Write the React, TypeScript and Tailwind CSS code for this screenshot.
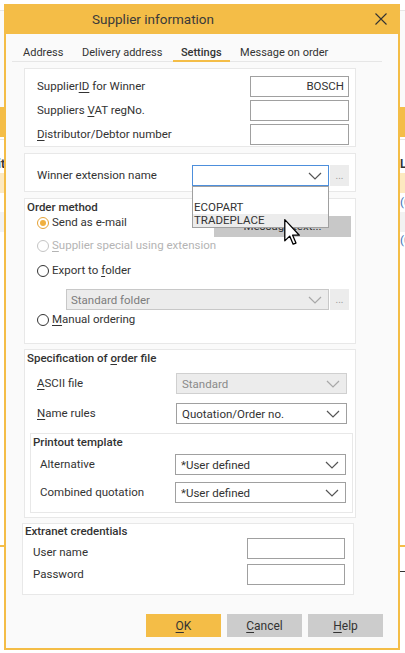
import React from "react";

const Chevron = ({ color = "#555" }: { color?: string }) => (
  <svg width="14" height="8" viewBox="0 0 14 8" className="shrink-0">
    <polyline points="1,1 7,7 13,1" fill="none" stroke={color} strokeWidth="1.2" />
  </svg>
);

const U = ({ children }: { children: React.ReactNode }) => (
  <span className="underline decoration-1 underline-offset-[2px]">{children}</span>
);

type SelectProps = {
  value?: string;
  disabled?: boolean;
  focused?: boolean;
  className?: string;
  children?: React.ReactNode;
};

const Select = ({ value = "", disabled, focused, className = "", children }: SelectProps) => (
  <div
    className={
      "relative h-[21px] flex items-center justify-between pl-[5px] pr-[6px] border " +
      (focused
        ? "border-[#4d8fdc] bg-white "
        : disabled
        ? "border-[#d0d0d0] bg-[#ececec] text-[#8a8a8a] "
        : "border-[#a0a0a0] bg-white text-[#333] ") +
      className
    }
  >
    <span className="truncate leading-[14px]">{value}</span>
    <Chevron color={disabled ? "#a8a8a8" : "#555"} />
    {children}
  </div>
);

const Dots = () => (
  <div className="w-[19px] h-[21px] ml-[1px] bg-[#ececec] flex items-center justify-center text-[10px] text-[#9a9a9a] leading-none">
    ...
  </div>
);

const Radio = ({ checked, disabled }: { checked?: boolean; disabled?: boolean }) => (
  <div
    className={
      "w-[12px] h-[12px] rounded-full border flex items-center justify-center shrink-0 bg-white " +
      (checked ? "border-[#e5a235]" : disabled ? "border-[#c4c4c4]" : "border-[#333]")
    }
  >
    {checked && <div className="w-[6px] h-[6px] rounded-full bg-[#f0b040]" />}
  </div>
);

const Input = ({ value = "", className = "" }: { value?: string; className?: string }) => (
  <div
    className={
      "h-[21px] border border-[#a0a0a0] bg-white flex items-center justify-end pr-[4px] text-[#333] " +
      className
    }
  >
    {value}
  </div>
);

const Button = ({ children, primary }: { children: React.ReactNode; primary?: boolean }) => (
  <div
    className={
      "w-[75px] h-[23px] flex items-center justify-center text-[12px] text-[#333] " +
      (primary ? "bg-[#f4bd47]" : "bg-[#cccccc]")
    }
  >
    {children}
  </div>
);

const Cursor = () => (
  <svg width="17" height="27" viewBox="0 0 13 21" className="absolute left-[284px] top-[219px] z-30">
    <path
      d="M0.5,0.5 L0.5,17 L4.3,13.3 L7,19.6 L9.2,18.7 L6.6,12.6 L11.8,12.6 Z"
      fill="#fff"
      stroke="#000"
      strokeWidth="1"
      strokeLinejoin="round"
    />
  </svg>
);

export default function App() {
  return (
    <div className="relative w-[405px] h-[653px] overflow-hidden bg-white font-[Roboto,'Liberation_Sans',sans-serif] text-[11.5px] text-[#333]">
      {/* background page */}
      <div className="flex flex-col w-full">
        <div className="h-[10px] bg-white" />
        <div className="h-px bg-[#e6e6e6]" />
        <div className="h-[96px] bg-[#fafafa]" />
        <div className="h-[30px] bg-[#f4bd47]" />
        <div className="h-[2px] bg-white" />
        <div className="h-px bg-[#e6e6e6]" />
        <div className="h-[33px] flex items-end justify-between font-bold text-[12px] leading-[18px]">
          <div className="w-[5px] overflow-hidden flex justify-end"><span>Unit</span></div>
          <div className="w-[6px] overflow-hidden"><span className="pl-[1px]">List</span></div>
        </div>
        <div className="h-[20px] bg-[#fde9c0]" />
        <div className="h-[19px] flex justify-end items-center text-[#3b6fb6]">
          <div className="w-[5px] overflow-hidden"><span>(0)</span></div>
        </div>
        <div className="h-[20px] bg-[#f2f2f2]" />
        <div className="h-[18px] flex justify-end items-center text-[#3b6fb6]">
          <div className="w-[5px] overflow-hidden"><span>(0)</span></div>
        </div>
        <div className="h-[295px]" />
        <div className="h-[2px] bg-[#f4bd47]" />
        <div className="h-[24px]" />
        <div className="h-px flex justify-end">
          <div className="w-[5px] bg-[#333]" />
        </div>
      </div>

      {/* dialog */}
      <div className="absolute left-[4px] top-[4px] w-[396px] h-[646px] border-x-2 border-b-2 border-[#f4bd47] bg-[#fafafa] flex flex-col">
        <div className="h-[30px] bg-[#f4bd47] flex items-center justify-between pl-[86px] pr-[11px]">
          <span className="text-[13.5px] text-[#3a3a3a]">Supplier information</span>
          <svg width="12" height="12" viewBox="0 0 12 12">
            <path d="M0.5,0.5 L11.5,11.5 M11.5,0.5 L0.5,11.5" stroke="#333" strokeWidth="1.1" />
          </svg>
        </div>

        {/* tabs */}
        <div className="ml-[6px] w-[370px] h-[28px] border-b border-[#e6e6e6] flex items-end gap-[2.5px] pl-[3px] text-[11px]">
          <div className="px-[8px] pb-[1px] leading-[14px]">Address</div>
          <div className="px-[8px] pb-[1px] leading-[14px]">Delivery address</div>
          <div className="px-[8px] pb-0 leading-[14px] border-b-2 border-[#f4bd47] -mb-px font-medium">Settings</div>
          <div className="px-[8px] pb-[1px] leading-[14px]">Message on order</div>
        </div>

        <div className="pl-[18px] flex flex-col">
          {/* section 1 */}
          <div className="mt-[6px] w-[332px] border border-[#e8e8e8] bg-white pt-[7px] pb-[1px] pl-[12px] pr-[6px] flex flex-col gap-[3px]">
            <div className="h-[21px] flex items-center">
              <span>Supplier<U>ID</U> for Winner</span>
              <Input value="BOSCH" className="ml-auto w-[99px]" />
            </div>
            <div className="h-[21px] flex items-center">
              <span>Suppliers <U>V</U>AT regNo.</span>
              <Input className="ml-auto w-[99px]" />
            </div>
            <div className="h-[21px] flex items-center">
              <span><U>D</U>istributor/Debtor number</span>
              <Input className="ml-auto w-[99px]" />
            </div>
          </div>

          {/* section 2 */}
          <div className="mt-[6px] w-[332px] border border-[#e8e8e8] bg-white pt-[11px] pb-[5px] pl-[12px] flex items-center">
            <span className="w-[155px]">Winner extension name</span>
            <div className="relative">
              <Select focused className="w-[137px]">
                <div className="absolute left-[-1px] top-[20px] w-[137px] h-[42px] border border-[#a0a0a0] bg-white z-20 flex flex-col text-[#333]">
                  <div className="h-[14px]" />
                  <div className="h-[13px] leading-[13px] pl-[1px]">ECOPART</div>
                  <div className="h-[13px] leading-[13px] pl-[1px] bg-[#ececec]">TRADEPLACE</div>
                </div>
              </Select>
            </div>
            <Dots />
          </div>

          {/* section 3 */}
          <div className="mt-[6px] w-[332px] h-[146px] border border-[#e8e8e8] bg-white pt-px flex flex-col">
            <div className="pl-[2px] leading-[14px] font-medium">Order method</div>
            <div className="mt-[2px] flex items-start pr-[4px]">
              <div className="pl-[12px] h-[14px] flex items-center gap-[3px]">
                <Radio checked />
                <span>Send as e-mail</span>
              </div>
              <div className="ml-auto w-[137px] h-[21px] bg-[#c8c8c8] flex items-center justify-center">
                Message text...
              </div>
            </div>
            <div className="mt-[2px] pl-[12px] h-[14px] flex items-center gap-[3px] text-[#b4b4b4]">
              <Radio disabled />
              <span><U>S</U>upplier special using extension</span>
            </div>
            <div className="mt-[11px] pl-[12px] h-[14px] flex items-center gap-[3px]">
              <Radio />
              <span>Export to <U>f</U>older</span>
            </div>
            <div className="mt-[11px] pl-[41px] flex items-center">
              <Select disabled value="Standard folder" className="w-[263px] !pl-[4px] !text-[#7c7c7c] !border-[#c8c8c8]" />
              <Dots />
            </div>
            <div className="mt-[3px] pl-[12px] h-[14px] flex items-center gap-[3px]">
              <Radio />
              <span><U>M</U>anual ordering</span>
            </div>
          </div>

          {/* section 4 */}
          <div className="mt-[5px] w-[332px] border border-[#e8e8e8] bg-white pt-px pb-[4px] flex flex-col">
            <div className="pl-[2px] leading-[14px] font-medium">Specification of <U>o</U>rder file</div>
            <div className="mt-[8px] pl-[12px] pr-[8px] flex items-center">
              <span><U>A</U>SCII file</span>
              <Select disabled value="Standard" className="ml-auto w-[171px]" />
            </div>
            <div className="mt-[9px] pl-[12px] pr-[8px] flex items-center">
              <span><U>N</U>ame rules</span>
              <Select value="Quotation/Order no." className="ml-auto w-[171px]" />
            </div>
            <div className="mt-[9px] ml-[5px] w-[323px] border border-[#e8e8e8] pt-px pb-[9px] flex flex-col">
              <div className="pl-[2px] leading-[14px] font-medium">Printout template</div>
              <div className="mt-[5px] pl-[9px] pr-[6px] flex items-center">
                <span>Alternative</span>
                <Select value="*User defined" className="ml-auto w-[171px]" />
              </div>
              <div className="mt-[7px] pl-[9px] pr-[6px] flex items-center">
                <span>Combined quotation</span>
                <Select value="*User defined" className="ml-auto w-[171px]" />
              </div>
            </div>
          </div>

          {/* section 5 */}
          <div className="mt-[5px] -ml-[2px] w-[332px] border border-[#e8e8e8] bg-white pb-[9px] flex flex-col">
            <div className="pl-[2px] leading-[14px] font-medium">Extranet credentials</div>
            <div className="pl-[10px] pr-[8px] flex items-start">
              <span className="pt-[7px] leading-[14px]">User name</span>
              <Input className="ml-auto w-[98px]" />
            </div>
            <div className="mt-[5px] pl-[10px] pr-[8px] flex items-center">
              <span>Password</span>
              <Input className="ml-auto w-[98px]" />
            </div>
          </div>
        </div>

        {/* buttons */}
        <div className="mt-[19px] pr-[15px] flex justify-end gap-[6px]">
          <Button primary><U>O</U>K</Button>
          <Button><U>C</U>ancel</Button>
          <Button><U>H</U>elp</Button>
        </div>
      </div>

      <Cursor />
    </div>
  );
}
